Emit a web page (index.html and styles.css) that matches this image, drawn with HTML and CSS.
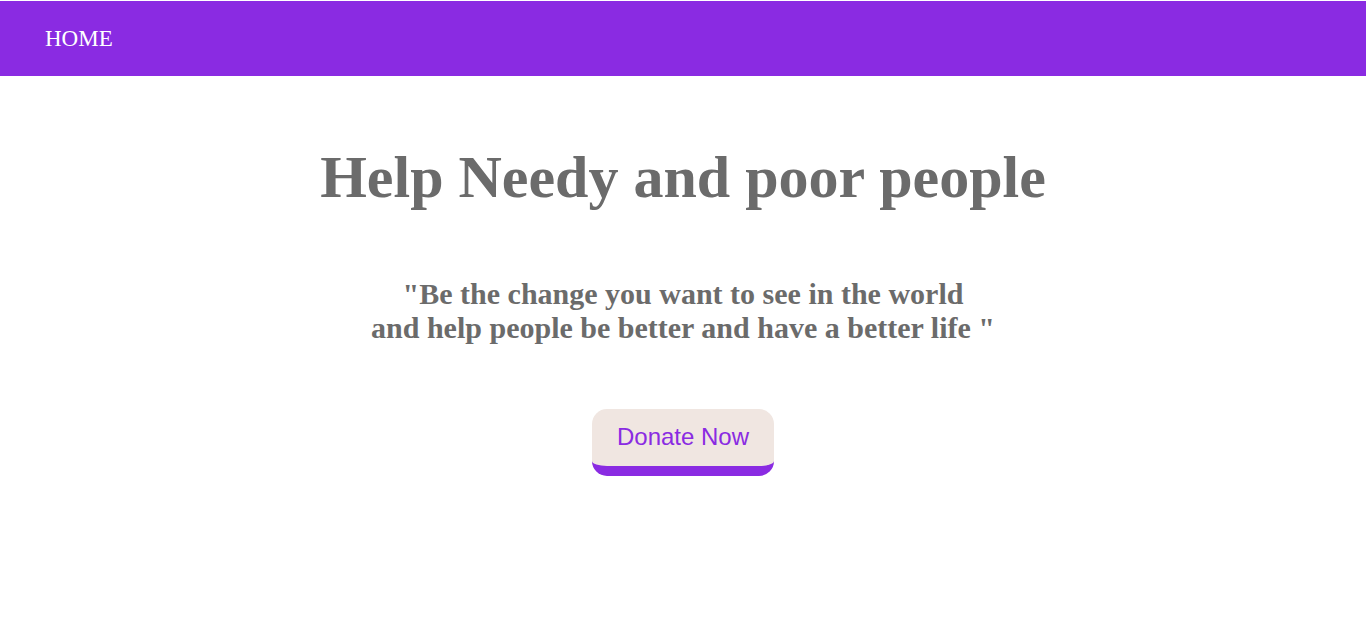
FILE: index.html
```html
<!DOCTYPE html>
<html>
<head>
<meta charset="utf-8">
<link rel="stylesheet" href="styles.css">
</head>
<body>
<nav class="nav"><a class="nav-link" href="#">HOME</a></nav>
<main class="hero">
  <h1 class="title">Help Needy and poor people</h1>
  <p class="quote">"Be the change you want to see in the world<br>and help people be better and have a better life "</p>
  <button class="donate">Donate Now</button>
</main>
</body>
</html>
```
FILE: styles.css
```css
html, body { margin: 0; padding: 0; background: #fff; }
body { font-family: "Liberation Serif", "Times New Roman", serif; padding-top: 1px; }
.nav {
  background: #8a2be2;
  height: 75px;
  display: flex;
  align-items: center;
  padding-left: 45px;
}
.nav-link { color: #fff; text-decoration: none; font-size: 23px; }
.hero { display: flex; flex-direction: column; align-items: center; }
.title {
  margin: 65px 0 0;
  font-size: 60px;
  font-weight: bold;
  color: #6b6b6b;
  line-height: 72px;
}
.quote {
  margin: 64px 0 0;
  font-size: 30px;
  font-weight: bold;
  color: #6b6b6b;
  text-align: center;
  line-height: 34px;
}
.donate {
  margin-top: 64px;
  width: 182px;
  height: 67px;
  padding: 0 0 2px;
  border: none;
  border-bottom: 10px solid #8a2be2;
  border-radius: 15px;
  background: #f0e6e1;
  color: #8a2be2;
  font-family: "Liberation Sans", Arial, sans-serif;
  font-size: 24px;
}
```
